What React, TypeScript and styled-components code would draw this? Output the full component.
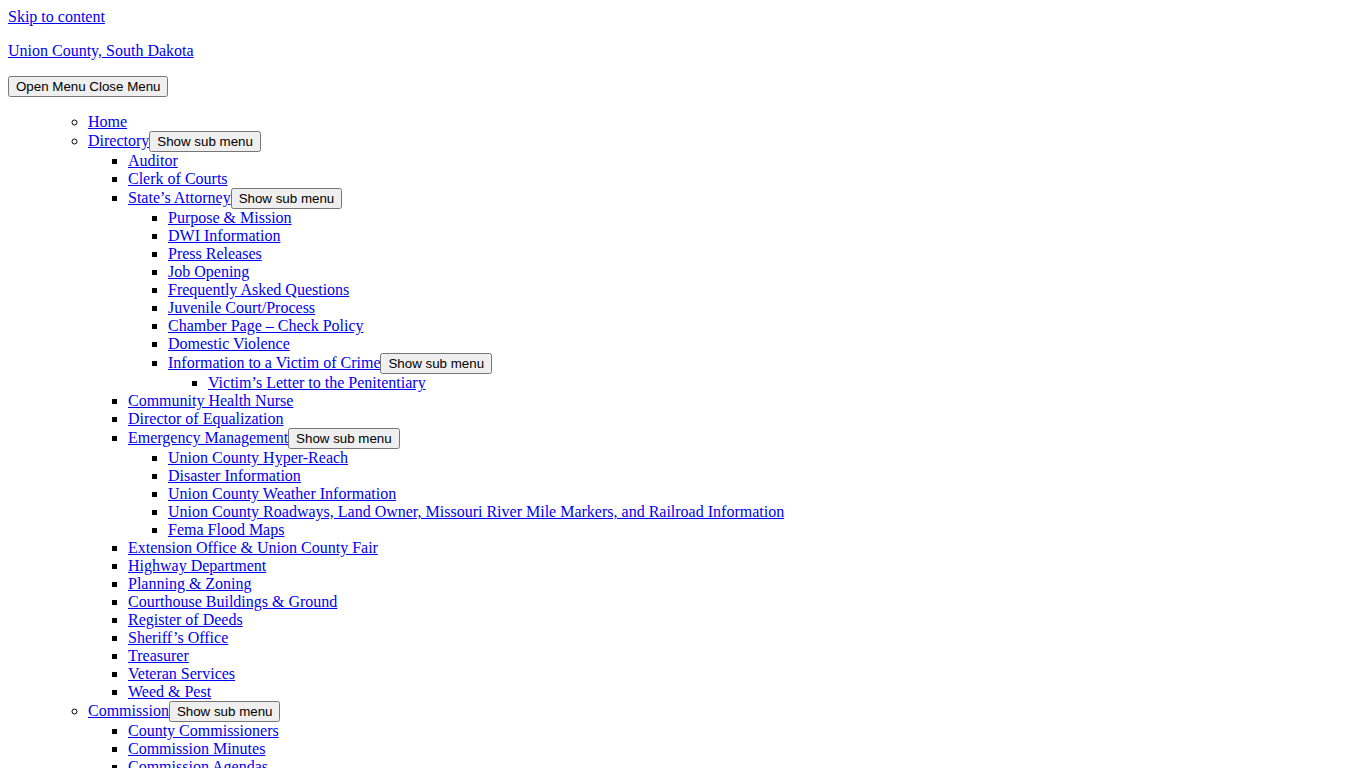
import React from "react";
import styled, { createGlobalStyle } from "styled-components";

const GlobalStyle = createGlobalStyle`
  body {
    margin: 8px;
    font-family: "Liberation Serif", "Times New Roman", serif;
    font-size: 16px;
    color: #000;
    background: #fff;
  }
`;

const Link = styled.a`
  color: #0000ee;
  text-decoration: underline;
`;

const SkipWrap = styled.div``;

const SiteTitle = styled.p`
  margin: 16px 0;
`;

const NativeButton = styled.button`
  font-family: "Liberation Sans", Arial, sans-serif;
  font-size: 13.3333px;
`;

const OuterList = styled.ul`
  margin: 16px 0;
  padding-left: 40px;
  list-style: none;
`;

const MenuList = styled.ul<{ $depth: number }>`
  margin: 0;
  padding-left: 40px;
  list-style-type: ${(p) => (p.$depth === 0 ? "circle" : "square")};
`;

const MenuItem = styled.li``;

type Node = { label: string; children?: Node[] };

const menu: Node[] = [
  { label: "Home" },
  {
    label: "Directory",
    children: [
      { label: "Auditor" },
      { label: "Clerk of Courts" },
      {
        label: "State’s Attorney",
        children: [
          { label: "Purpose & Mission" },
          { label: "DWI Information" },
          { label: "Press Releases" },
          { label: "Job Opening" },
          { label: "Frequently Asked Questions" },
          { label: "Juvenile Court/Process" },
          { label: "Chamber Page – Check Policy" },
          { label: "Domestic Violence" },
          {
            label: "Information to a Victim of Crime",
            children: [{ label: "Victim’s Letter to the Penitentiary" }],
          },
        ],
      },
      { label: "Community Health Nurse" },
      { label: "Director of Equalization" },
      {
        label: "Emergency Management",
        children: [
          { label: "Union County Hyper-Reach" },
          { label: "Disaster Information" },
          { label: "Union County Weather Information" },
          {
            label:
              "Union County Roadways, Land Owner, Missouri River Mile Markers, and Railroad Information",
          },
          { label: "Fema Flood Maps" },
        ],
      },
      { label: "Extension Office & Union County Fair" },
      { label: "Highway Department" },
      { label: "Planning & Zoning" },
      { label: "Courthouse Buildings & Ground" },
      { label: "Register of Deeds" },
      { label: "Sheriff’s Office" },
      { label: "Treasurer" },
      { label: "Veteran Services" },
      { label: "Weed & Pest" },
    ],
  },
  {
    label: "Commission",
    children: [
      { label: "County Commissioners" },
      { label: "Commission Minutes" },
      { label: "Commission Agendas" },
      { label: "Commission Meeting Videos" },
    ],
  },
  { label: "Elections" },
  { label: "Contact" },
];

function MenuTree({ items, depth }: { items: Node[]; depth: number }) {
  return (
    <MenuList $depth={depth}>
      {items.map((item) => (
        <MenuItem key={item.label}>
          <Link href="#">{item.label}</Link>
          {item.children && (
            <>
              <NativeButton>Show sub menu</NativeButton>
              <MenuTree items={item.children} depth={depth + 1} />
            </>
          )}
        </MenuItem>
      ))}
    </MenuList>
  );
}

export default function App() {
  return (
    <>
      <GlobalStyle />
      <SkipWrap>
        <Link href="#content">Skip to content</Link>
      </SkipWrap>
      <SiteTitle>
        <Link href="#">Union County, South Dakota</Link>
      </SiteTitle>
      <NativeButton>Open Menu Close Menu</NativeButton>
      <nav>
        <OuterList>
          <MenuTree items={menu} depth={0} />
        </OuterList>
      </nav>
    </>
  );
}
